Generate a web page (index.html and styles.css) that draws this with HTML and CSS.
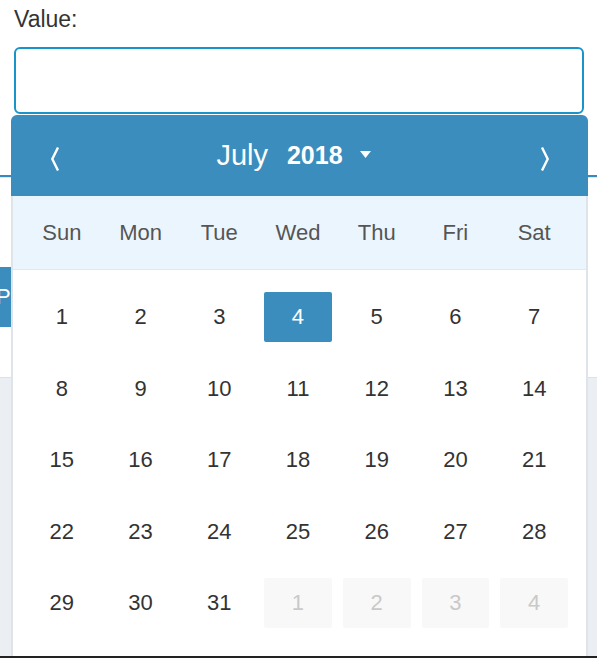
FILE: index.html
```html
<!DOCTYPE html>
<html>
<head>
<meta charset="utf-8">
<link rel="stylesheet" href="styles.css">
</head>
<body>
<div class="page">
  <div class="field">
    <label class="label">Value:</label>
    <div class="input"></div>
  </div>
  <div class="tabs"></div>
  <div class="actions">
    <button class="btn">P</button>
  </div>
  <div class="panel"></div>
</div>

<div class="calendar">
  <div class="cal-head">
    <button class="nav">
      <svg width="10" height="26" viewBox="0 0 10 26"><polyline points="8,1.5 2.3,13 8,24.5" fill="none" stroke="#fff" stroke-width="2.4" stroke-linejoin="miter"/></svg>
    </button>
    <div class="title">
      <span class="month">July</span>
      <span class="year">2018</span>
      <svg class="caret" width="11" height="7" viewBox="0 0 11 7"><polygon points="0,0 11,0 5.5,7" fill="#fff"/></svg>
    </div>
    <button class="nav">
      <svg width="10" height="26" viewBox="0 0 10 26"><polyline points="2,1.5 7.7,13 2,24.5" fill="none" stroke="#fff" stroke-width="2.4" stroke-linejoin="miter"/></svg>
    </button>
  </div>
  <div class="cal-body">
    <div class="weekdays">
      <span>Sun</span><span>Mon</span><span>Tue</span><span>Wed</span><span>Thu</span><span>Fri</span><span>Sat</span>
    </div>
    <div class="days">
      <span class="day">1</span><span class="day">2</span><span class="day">3</span><span class="day selected">4</span><span class="day">5</span><span class="day">6</span><span class="day">7</span>
      <span class="day">8</span><span class="day">9</span><span class="day">10</span><span class="day">11</span><span class="day">12</span><span class="day">13</span><span class="day">14</span>
      <span class="day">15</span><span class="day">16</span><span class="day">17</span><span class="day">18</span><span class="day">19</span><span class="day">20</span><span class="day">21</span>
      <span class="day">22</span><span class="day">23</span><span class="day">24</span><span class="day">25</span><span class="day">26</span><span class="day">27</span><span class="day">28</span>
      <span class="day">29</span><span class="day">30</span><span class="day">31</span><span class="day muted">1</span><span class="day muted">2</span><span class="day muted">3</span><span class="day muted">4</span>
    </div>
  </div>
</div>
</body>
</html>
```

FILE: styles.css
```css
* { box-sizing: border-box; }
html, body { margin: 0; padding: 0; }
body {
  width: 597px;
  height: 658px;
  overflow: hidden;
  background: #fff;
  font-family: "Liberation Sans", Arial, sans-serif;
  color: #333;
}
.page {
  display: flex;
  flex-direction: column;
  height: 658px;
}
.field {
  padding: 6px 13px 0 14px;
  display: flex;
  flex-direction: column;
}
.label {
  font-size: 23px;
  line-height: 26px;
  color: #333;
}
.input {
  margin-top: 15px;
  height: 67px;
  border: 2px solid #1994cb;
  border-radius: 6px;
  background: #fff;
}
.tabs {
  height: 63px;
  border-bottom: 2px solid #3a88c0;
  box-shadow: 0 1px 0 #dae8f4;
}
.actions {
  margin-top: 90px;
  height: 60px;
  display: flex;
}
.btn {
  height: 60px;
  width: 11px;
  overflow: hidden;
  border: 0;
  padding: 0;
  background: #3b8dbd;
  color: #fff;
  font-family: inherit;
  font-size: 22px;
  text-align: left;
  text-indent: -4px;
}
.panel {
  margin-top: 50px;
  flex: 1;
  border-top: 1px solid #dde1e6;
  border-bottom: 2px solid #222;
  background: #ebeef3;
}

.calendar {
  position: absolute;
  left: 11px;
  top: 115px;
  width: 577px;
  height: 541px;
  display: flex;
  flex-direction: column;
}
.cal-head {
  height: 81px;
  background: #3b8dbd;
  border-radius: 6px 6px 0 0;
  display: flex;
  align-items: center;
  padding: 0 28px 0 29px;
  color: #fff;
}
.nav {
  width: 30px;
  height: 40px;
  border: 0;
  padding: 0;
  margin-top: 7px;
  background: transparent;
  display: flex;
  align-items: center;
  justify-content: center;
}
.title {
  flex: 1;
  display: flex;
  align-items: center;
  justify-content: center;
  padding-right: 13px;
}
.month {
  font-size: 29px;
  margin-right: 19px;
}
.year {
  font-size: 25px;
  font-weight: bold;
  margin-right: 17px;
}
.caret { margin-top: -2px; }

.cal-body {
  flex: 1;
  background: #fff;
  border-left: 2px solid #dfe4ea;
  border-right: 2px solid #dfe4ea;
  display: flex;
  flex-direction: column;
}
.weekdays {
  height: 74px;
  background: #ebf5fe;
  border-bottom: 1px solid #e4e9ee;
  display: grid;
  grid-template-columns: repeat(7, 1fr);
  column-gap: 11px;
  padding: 0 18px 0 15px;
  align-items: center;
  font-size: 22px;
  color: #555;
}
.weekdays span { text-align: center; }
.days {
  display: grid;
  grid-template-columns: repeat(7, 1fr);
  grid-auto-rows: 50px;
  column-gap: 11px;
  row-gap: 21.5px;
  padding: 22px 18px 0 15px;
}
.day {
  display: flex;
  align-items: center;
  justify-content: center;
  font-size: 22px;
  color: #333;
  border-radius: 2px;
}
.day.selected {
  background: #3b8dbd;
  color: #fff;
}
.day.muted {
  background: #f8f8f8;
  color: #c9c9c9;
}
```
